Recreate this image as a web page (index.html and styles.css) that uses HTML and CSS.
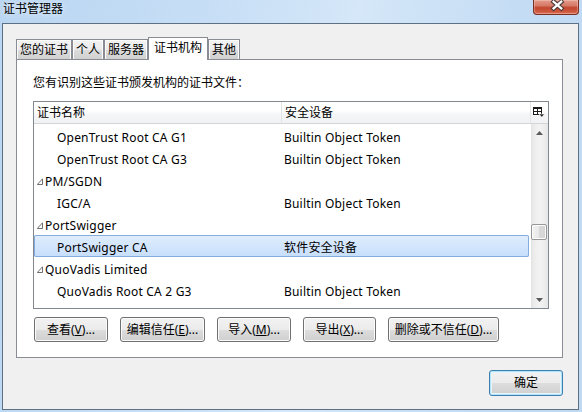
FILE: index.html
```html
<!DOCTYPE html>
<html lang="zh-CN">
<head>
<meta charset="utf-8">
<title>证书管理器</title>
<link rel="stylesheet" href="styles.css">
</head>
<body>
<div class="window">
  <div class="titlebar">
    <span class="title">证书管理器</span>
    <div class="close">
      <svg width="46" height="14" viewBox="0 0 46 14">
        <path d="M20.5 1.5 L28.5 8.5 M28.5 1.5 L20.5 8.5" stroke="#4a3a3a" stroke-width="4.6" stroke-linecap="square" fill="none"/>
        <path d="M20.5 1.5 L28.5 8.5 M28.5 1.5 L20.5 8.5" stroke="#ffffff" stroke-width="2.4" stroke-linecap="square" fill="none"/>
      </svg>
    </div>
  </div>
  <div class="client">
    <div class="tabs">
      <div class="tab t1">您的证书</div>
      <div class="tab t2">个人</div>
      <div class="tab t3">服务器</div>
      <div class="tab active">证书机构</div>
      <div class="tab t5">其他</div>
    </div>
    <div class="panel">
      <div class="label">您有识别这些证书颁发机构的证书文件：</div>
      <div class="tree">
        <div class="header">
          <div class="hcell c1">证书名称</div>
          <div class="hcell c2">安全设备</div>
          <div class="hcell picker">
            <svg width="12" height="11" viewBox="0 0 12 11">
              <rect x="0.5" y="0.5" width="8" height="7" fill="#fff" stroke="#1a1a1a"/>
              <rect x="0" y="0" width="9" height="2" fill="#1a1a1a"/>
              <path d="M4.5 2 V8 M0 4.5 H9" stroke="#1a1a1a" stroke-width="1"/>
              <path d="M6 7 H11.5 L8.75 10.2 Z" fill="#1a1a1a" stroke="#fff" stroke-width="0.6"/>
            </svg>
          </div>
        </div>
        <div class="body">
          <div class="rows">
            <div class="row child"><span class="n">OpenTrust Root CA G1</span><span class="d">Builtin Object Token</span></div>
            <div class="row child"><span class="n">OpenTrust Root CA G3</span><span class="d">Builtin Object Token</span></div>
            <div class="row group"><span class="n"><svg class="tri" width="6" height="7" viewBox="0 0 6 7"><path d="M5.5 0.8 V6.5 H0.3 Z" fill="#fff" stroke="#707070" stroke-width="1"/></svg>PM/SGDN</span></div>
            <div class="row child"><span class="n">IGC/A</span><span class="d">Builtin Object Token</span></div>
            <div class="row group"><span class="n"><svg class="tri" width="6" height="7" viewBox="0 0 6 7"><path d="M5.5 0.8 V6.5 H0.3 Z" fill="#fff" stroke="#707070" stroke-width="1"/></svg>PortSwigger</span></div>
            <div class="row child selected"><span class="n">PortSwigger CA</span><span class="d">软件安全设备</span></div>
            <div class="row group"><span class="n"><svg class="tri" width="6" height="7" viewBox="0 0 6 7"><path d="M5.5 0.8 V6.5 H0.3 Z" fill="#fff" stroke="#707070" stroke-width="1"/></svg>QuoVadis Limited</span></div>
            <div class="row child"><span class="n">QuoVadis Root CA 2 G3</span><span class="d">Builtin Object Token</span></div>
            <div class="row child"><span class="n">QuoVadis Root CA 3</span><span class="d">Builtin Object Token</span></div>
          </div>
          <div class="scrollbar">
            <div class="sb-btn">
              <svg width="7" height="4" viewBox="0 0 7 4"><path d="M3.5 0 L7 4 H0 Z" fill="#5a5a5a"/></svg>
            </div>
            <div class="track"><div class="thumb"></div></div>
            <div class="sb-btn">
              <svg width="7" height="4" viewBox="0 0 7 4"><path d="M0 0 H7 L3.5 4 Z" fill="#5a5a5a"/></svg>
            </div>
          </div>
        </div>
      </div>
      <div class="buttons">
        <button class="btn b1">查看(<u>V</u>)...</button>
        <button class="btn b2">编辑信任(<u>E</u>)...</button>
        <button class="btn b3">导入(<u>M</u>)...</button>
        <button class="btn b4">导出(<u>X</u>)...</button>
        <button class="btn b5">删除或不信任(<u>D</u>)...</button>
      </div>
    </div>
    <div class="footer">
      <button class="btn ok">确定</button>
    </div>
  </div>
</div>
</body>
</html>
```
FILE: styles.css
```css
* { box-sizing: border-box; }
html, body { margin: 0; padding: 0; }
body {
  width: 582px;
  height: 412px;
  overflow: hidden;
  font-family: "Noto Sans", "Noto Sans CJK SC", sans-serif;
  font-size: 12px;
  color: #000;
  background: #c4dcf4;
}
.window {
  width: 582px;
  height: 412px;
  display: flex;
  flex-direction: column;
  background: linear-gradient(100deg, #bad6f2 0%, #c8dff6 35%, #d5e7f8 55%, #c4dcf4 80%, #bfd9f3 100%);
}
.titlebar {
  height: 23px;
  flex: none;
  display: flex;
  justify-content: space-between;
  align-items: flex-start;
}
.title {
  padding: 1px 0 0 3px;
  line-height: 16px;
  text-shadow: 0 0 6px rgba(255,255,255,0.9);
}
.close {
  width: 46px;
  height: 15px;
  margin-right: 3px;
  border: 1px solid #7a2e24;
  border-top: none;
  border-radius: 0 0 4px 4px;
  background: linear-gradient(#e49b8c 0%, #d57a66 40%, #c2462f 55%, #cf5a40 85%, #dc7a62 100%);
  box-shadow: inset 0 0 0 1px rgba(255,220,210,0.35);
  display: flex;
  justify-content: center;
}
.close svg { display: block; }
.client {
  flex: 1;
  margin: 0 3px 2px 2px;
  border: 1px solid #5e7184;
  background: #f0f0f0;
  padding: 13px 15px 0 13px;
  display: flex;
  flex-direction: column;
}
.tabs {
  display: flex;
  align-items: flex-end;
  height: 22px;
  flex: none;
  position: relative;
  z-index: 1;
}
.tab {
  height: 20px;
  border: 1px solid #898c95;
  border-bottom: none;
  background: linear-gradient(#f2f2f2 0%, #ebebeb 50%, #dddddd 51%, #d0d0d0 100%);
  box-shadow: inset 1px 1px 0 #fcfcfc, inset -1px 0 0 #fcfcfc;
  text-align: center;
  line-height: 17px;
  padding-top: 1px;
  white-space: nowrap;
}
.t1 { width: 56px; }
.t2 { width: 32px; }
.t3 { width: 44px; }
.t5 { width: 32px; }
.tab.active {
  width: 60px;
  height: 23px;
  margin-bottom: -1px;
  background: #fff;
  box-shadow: none;
  line-height: 16px;
  padding-top: 2px;
}
.panel {
  flex: none;
  width: 547px;
  height: 299px;
  border: 1px solid #898c95;
  background: #fff;
  padding: 15px 0 0 16px;
}
.label {
  line-height: 16px;
  margin-bottom: 10px;
}
.tree {
  width: 516px;
  height: 208px;
  border: 1px solid #828790;
  display: flex;
  flex-direction: column;
  overflow: hidden;
}
.header {
  height: 22px;
  flex: none;
  display: flex;
  border-bottom: 1px solid #d5d5d5;
  background: linear-gradient(#ffffff 0%, #ffffff 40%, #f4f5f7 60%, #f1f2f4 100%);
}
.hcell {
  line-height: 22px;
  padding-left: 3px;
  border-right: 1px solid #e3e4e6;
  white-space: nowrap;
}
.c1 { width: 248px; }
.c2 { width: 249px; }
.picker {
  width: 17px;
  border-right: none;
  padding: 5px 0 0 2px;
}
.picker svg { display: block; }
.body {
  flex: 1;
  display: flex;
  overflow: hidden;
}
.rows {
  flex: 1;
  padding-top: 1px;
  overflow: hidden;
}
.row {
  height: 22px;
  display: flex;
  align-items: flex-start;
  padding-top: 2px;
  line-height: 21px;
  letter-spacing: 0.2px;
  white-space: nowrap;
}
.row .n { width: 248px; flex: none; display: flex; align-items: center; }
.row .d { padding-left: 2px; }
.child .n { padding-left: 23px; }
.group .n { padding-left: 3px; }
.tri { display: block; margin-right: 2px; }
.row.selected {
  margin-right: 2px;
  border-radius: 2px;
  background: linear-gradient(#e0edfd, #c6defc);
  box-shadow: inset 0 0 0 1px #84acdd;
}
.scrollbar {
  width: 17px;
  flex: none;
  display: flex;
  flex-direction: column;
  background: linear-gradient(to right, #e3e3e3 0%, #ededed 20%, #f3f3f3 50%, #ededed 80%, #e6e6e6 100%);
}
.sb-btn {
  height: 17px;
  flex: none;
  display: flex;
  align-items: center;
  justify-content: center;
}
.sb-btn svg { display: block; }
.track {
  flex: 1;
  padding-top: 83px;
}
.thumb {
  width: 16px;
  height: 16px;
  border: 1px solid #979797;
  border-radius: 2px;
  background: linear-gradient(to right, #f3f3f3 0%, #e8e8e8 50%, #d9d9d9 51%, #d4d4d4 100%);
  box-shadow: inset 0 0 0 1px #fbfbfb;
}
.buttons {
  display: flex;
  gap: 12px;
  margin: 8px 0 0 1px;
}
.btn {
  height: 25px;
  padding: 0;
  border: 1px solid #707070;
  border-radius: 3px;
  background: linear-gradient(#f2f2f2 0%, #ebebeb 50%, #dddddd 51%, #cfcfcf 100%);
  box-shadow: inset 0 0 0 1px #fbfbfb;
  font-family: "Noto Sans", "Noto Sans CJK SC", sans-serif;
  font-size: 12px;
  line-height: 16px;
  color: #000;
  white-space: nowrap;
}
.btn u { text-underline-offset: 1px; }
.b1 { width: 74px; }
.b2 { width: 85px; }
.b3 { width: 74px; }
.b4 { width: 73px; }
.b5 { width: 111px; }
.footer {
  display: flex;
  justify-content: flex-end;
  padding-top: 12px;
}
.btn.ok {
  width: 74px;
  height: 26px;
  border-color: #3c7fb1;
  box-shadow: inset 0 0 0 1px #b5e4f7, inset 0 0 0 2px #e4f4fb;
}
```
